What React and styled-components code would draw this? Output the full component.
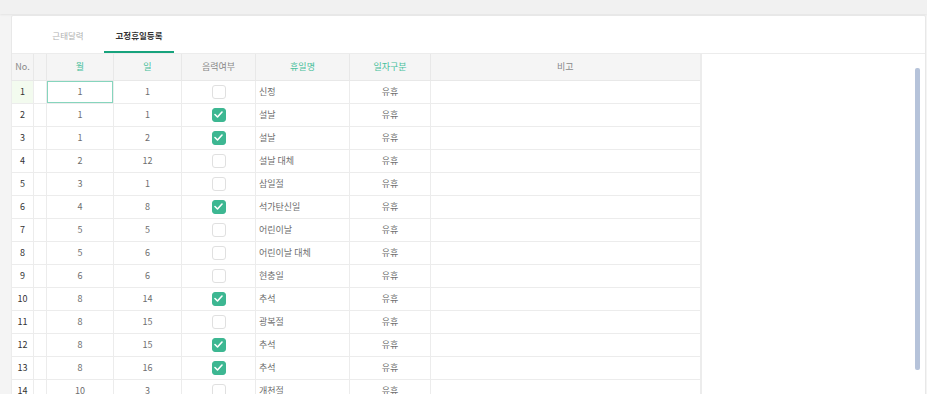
import React from "react";
import styled, { createGlobalStyle } from "styled-components";

const GlobalStyle = createGlobalStyle`
  html, body { margin: 0; padding: 0; }
  body {
    background: #f4f4f4;
    font-family: "Noto Sans CJK KR", "Noto Sans", sans-serif;
    overflow: hidden;
    width: 927px;
    height: 394px;
  }
  * { box-sizing: border-box; }
`;

const TopBar = styled.div`
  height: 14px;
  background: #f1f1f1;
  box-shadow: 0 1px 2px rgba(0, 0, 0, 0.07);
`;

const Page = styled.div`
  padding: 1px 1px 0 11px;
`;

const Card = styled.div`
  background: #fff;
  border: 1px solid #e8e8e8;
  border-radius: 2px;
  height: 420px;
`;

const TabBar = styled.div`
  display: flex;
  height: 38px;
  padding-left: 21px;
  border-bottom: 1px solid #ececec;
`;

const Tab = styled.div`
  width: 70px;
  margin-right: 1px;
  display: flex;
  align-items: center;
  justify-content: center;
  font-size: 8.5px;
  font-weight: ${(p) => (p.$active ? 700 : 400)};
  color: ${(p) => (p.$active ? "#333" : "#b0b0b0")};
  border-bottom: 2px solid ${(p) => (p.$active ? "#17a37d" : "transparent")};
  padding-top: 2px;
`;

const GridArea = styled.div`
  position: relative;
  display: flex;
  align-items: flex-start;
  height: 380px;
`;

const Table = styled.table`
  border-collapse: collapse;
  table-layout: fixed;
  width: 689px;
  border-right: 2px solid #ececec;
  margin-left: -1px;
`;

const Th = styled.th`
  height: 26px;
  padding: 0;
  background: #f5f5f5;
  border: 1px solid #e8e8e8;
  border-top: none;
  font-size: 9px;
  font-weight: 400;
  color: ${(p) => (p.$accent ? "#48c09b" : "#888")};
  text-align: center;
`;

const Td = styled.td`
  height: 23px;
  padding: 0 ${(p) => (p.$left ? "3px" : "0")};
  border: 1px solid #ececec;
  font-size: 9px;
  line-height: 12px;
  color: ${(p) => (p.$dark ? "#333" : "#6e6e6e")};
  text-align: ${(p) => (p.$left ? "left" : "center")};
  background: ${(p) => (p.$highlight ? "#f3fbef" : "#fff")};
  box-shadow: ${(p) => (p.$selected ? "inset 0 0 0 1px #86d5bd" : "none")};
  white-space: nowrap;
`;

const Check = styled.div`
  display: flex;
  align-items: center;
  justify-content: center;
  width: 14px;
  height: 14px;
  margin: 0 auto;
  border-radius: 3px;
  border: 1px solid ${(p) => (p.$on ? "#3db792" : "#e0e0e0")};
  background: ${(p) => (p.$on ? "#3db792" : "#fff")};
  svg { display: block; }
`;

const ScrollThumb = styled.div`
  position: absolute;
  right: 5px;
  top: 14px;
  width: 5px;
  height: 302px;
  border-radius: 2px;
  background: #b6c3da;
`;

const rows = [
  [1, 1, false, "신정"],
  [1, 1, true, "설날"],
  [1, 2, true, "설날"],
  [2, 12, false, "설날 대체"],
  [3, 1, false, "삼일절"],
  [4, 8, true, "석가탄신일"],
  [5, 5, false, "어린이날"],
  [5, 6, false, "어린이날 대체"],
  [6, 6, false, "현충일"],
  [8, 14, true, "추석"],
  [8, 15, false, "광복절"],
  [8, 15, true, "추석"],
  [8, 16, true, "추석"],
  [10, 3, false, "개천절"],
];

const widths = [22, 13, 67, 68, 74, 94, 81, 270];

export default function App() {
  return (
    <>
      <GlobalStyle />
      <TopBar />
      <Page>
        <Card>
          <TabBar>
            <Tab>근태달력</Tab>
            <Tab $active>고정휴일등록</Tab>
          </TabBar>
          <GridArea>
            <Table>
              <colgroup>
                {widths.map((w, i) => (
                  <col key={i} style={{ width: w }} />
                ))}
              </colgroup>
              <thead>
                <tr>
                  <Th>No.</Th>
                  <Th />
                  <Th $accent>월</Th>
                  <Th $accent>일</Th>
                  <Th>음력여부</Th>
                  <Th $accent>휴일명</Th>
                  <Th $accent>일자구분</Th>
                  <Th>비고</Th>
                </tr>
              </thead>
              <tbody>
                {rows.map(([m, d, lunar, name], i) => (
                  <tr key={i}>
                    <Td $dark $highlight={i === 0}>{i + 1}</Td>
                    <Td />
                    <Td $selected={i === 0}>{m}</Td>
                    <Td>{d}</Td>
                    <Td>
                      <Check $on={lunar}>
                        {lunar && (
                          <svg width="9" height="7" viewBox="0 0 9 7">
                            <path d="M1 3.5 L3.5 6 L8 1" fill="none" stroke="#fff" strokeWidth="1.6" strokeLinecap="round" strokeLinejoin="round" />
                          </svg>
                        )}
                      </Check>
                    </Td>
                    <Td $left>{name}</Td>
                    <Td>유휴</Td>
                    <Td />
                  </tr>
                ))}
              </tbody>
            </Table>
            <ScrollThumb />
          </GridArea>
        </Card>
      </Page>
    </>
  );
}
